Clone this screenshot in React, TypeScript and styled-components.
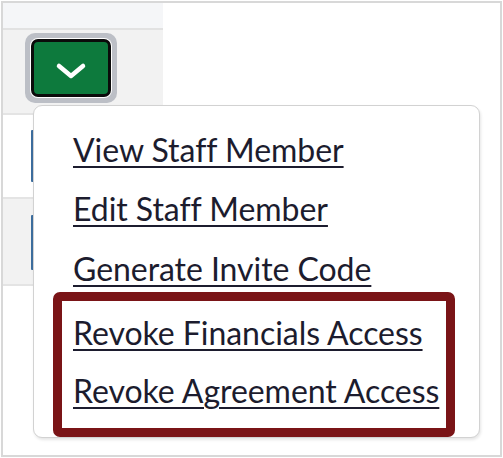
import React from "react";
import styled, { createGlobalStyle } from "styled-components";

const Global = createGlobalStyle`
  html, body { margin: 0; padding: 0; background: #ffffff; }
  body { font-family: Lato, "Noto Sans", sans-serif; }
`;

const Frame = styled.div`
  position: relative;
  box-sizing: border-box;
  margin: 1px;
  width: 501px;
  height: 456px;
  border: 2px solid #d8d8d8;
  background: #ffffff;
  overflow: hidden;
`;

const Table = styled.div`
  display: flex;
  flex-direction: column;
  width: 160px;
`;

const HeaderRow = styled.div`
  height: 25px;
  background: #f5f6f8;
  border-bottom: 2px solid #e2e2e2;
`;

const Row = styled.div<{ $shaded?: boolean; $h: number }>`
  display: flex;
  align-items: flex-start;
  height: ${(p) => p.$h}px;
  background: ${(p) => (p.$shaded ? "#f2f2f2" : "#ffffff")};
  border-bottom: 2px solid #e4e4e4;
`;

const LastRow = styled.div`
  flex: 1;
  background: #ffffff;
`;

const FocusRing = styled.div`
  margin: 3px 0 0 22px;
  box-sizing: border-box;
  width: 92px;
  height: 70px;
  padding: 6px;
  border-radius: 10px;
  background: #bcbfc6;
`;

const GreenButton = styled.button`
  box-sizing: border-box;
  width: 80px;
  height: 58px;
  padding: 0;
  display: flex;
  align-items: center;
  justify-content: center;
  background: #0d7a3d;
  border: 3px solid #0b0b0b;
  border-radius: 7px;
  box-shadow: 0 0 0 1px #ffffff;
  cursor: pointer;
`;

const BlueBar = styled.div<{ $top: number; $h: number }>`
  margin: ${(p) => p.$top}px 0 0 28px;
  width: 3px;
  height: ${(p) => p.$h}px;
  background: #3d6e9e;
  border-radius: 1px;
`;

const Menu = styled.div`
  position: absolute;
  left: 30px;
  top: 102px;
  box-sizing: border-box;
  width: 447px;
  height: 333px;
  padding: 14px 0 0 0;
  background: #ffffff;
  border: 1.5px solid #d2d2d2;
  border-radius: 9px;
  box-shadow: 1px 2px 3px rgba(0, 0, 0, 0.1);
  display: flex;
  flex-direction: column;
`;

const Item = styled.a<{ $h?: number }>`
  display: block;
  padding-left: 39px;
  height: ${(p) => p.$h ?? 59}px;
  line-height: 59px;
  font-family: Lato, "Noto Sans", sans-serif;
  font-size: 32px;
  letter-spacing: -0.05px;
  color: #1c1c2e;
  text-decoration: underline;
  text-decoration-thickness: 2px;
  text-underline-offset: 4px;
  white-space: nowrap;
  cursor: pointer;
`;

const Highlight = styled.div`
  box-sizing: border-box;
  margin: -6px 0 0 19px;
  width: 402px;
  height: 145px;
  padding-top: 2px;
  border: 9px solid #7a1417;
  border-radius: 7px;
  display: flex;
  flex-direction: column;
  & > a {
    padding-left: 11px;
  }
`;

const Chevron = () => (
  <svg width="32" height="20" viewBox="0 0 32 20" style={{ marginTop: 7 }}>
    <polyline
      points="4,4 16,14 28,4"
      fill="none"
      stroke="#ffffff"
      strokeWidth="4.5"
      strokeLinecap="round"
      strokeLinejoin="round"
    />
  </svg>
);

export default function App() {
  return (
    <>
      <Global />
      <Frame>
        <Table>
          <HeaderRow />
          <Row $shaded $h={83}>
            <FocusRing>
              <GreenButton aria-label="Actions">
                <Chevron />
              </GreenButton>
            </FocusRing>
          </Row>
          <Row $h={82}>
            <BlueBar $top={15} $h={52} />
          </Row>
          <Row $shaded $h={85}>
            <BlueBar $top={16} $h={55} />
          </Row>
          <LastRow />
        </Table>
        <Menu>
          <Item>View Staff Member</Item>
          <Item $h={60}>Edit Staff Member</Item>
          <Item>Generate Invite Code</Item>
          <Highlight>
            <Item $h={58}>Revoke Financials Access</Item>
            <Item $h={58}>Revoke Agreement Access</Item>
          </Highlight>
        </Menu>
      </Frame>
    </>
  );
}
